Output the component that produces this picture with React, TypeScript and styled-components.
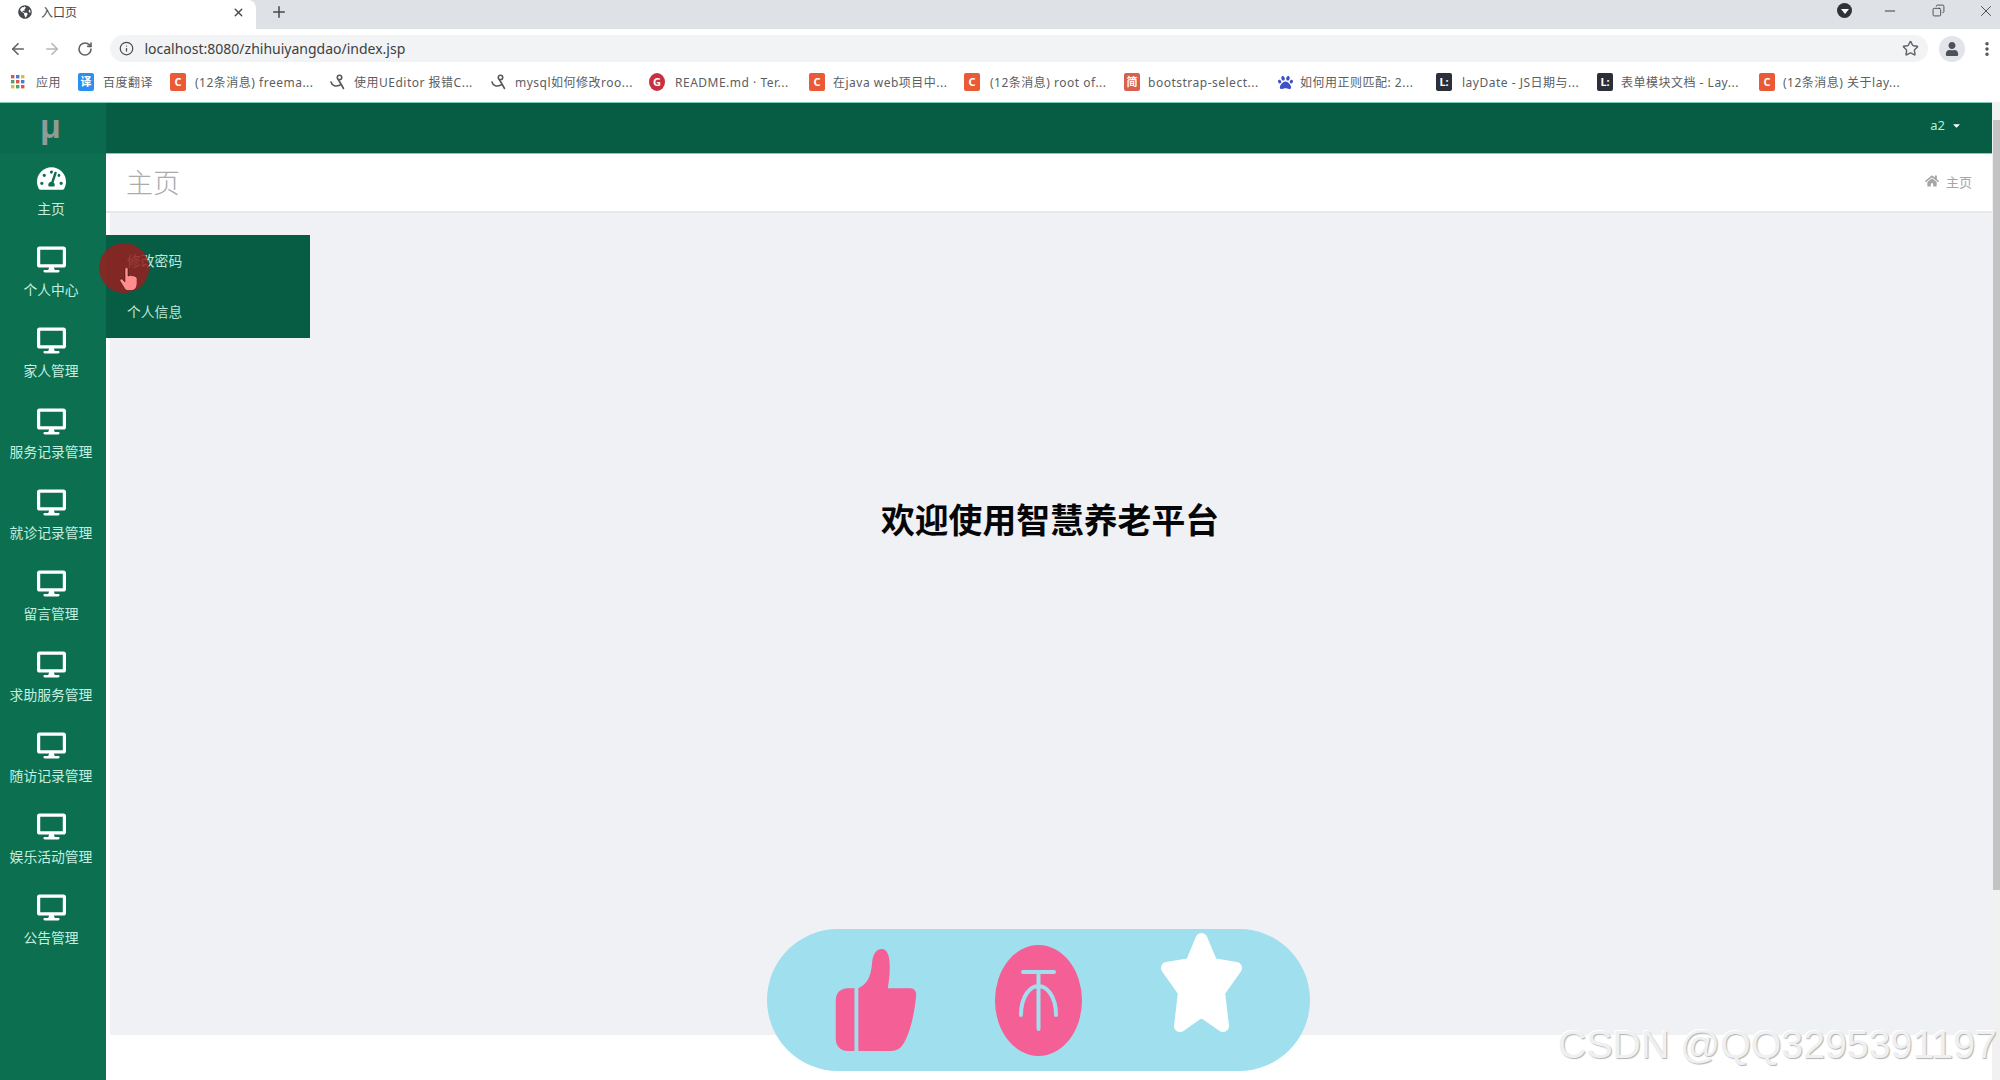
import React from "react";
import styled, { createGlobalStyle } from "styled-components";
import { ArrowLeft, ArrowRight, RotateCw, Info, Star, EllipsisVertical, Minus, X, Plus, Copy } from "lucide-react";
import { FaDesktop, FaTachometerAlt, FaHome, FaGlobeAmericas, FaUser, FaPaw, FaCaretDown } from "react-icons/fa";

const CJK = `"Noto Sans", "Noto Sans CJK SC", sans-serif`;

const Global = createGlobalStyle`
  html, body { margin: 0; padding: 0; width: 2000px; height: 1080px; overflow: hidden; background: #fff; }
  * { box-sizing: border-box; }
  body { font-family: ${CJK}; }
`;

const Screen = styled.div`
  position: relative;
  width: 2000px;
  height: 1080px;
  display: flex;
  flex-direction: column;
  overflow: hidden;
`;

/* ---------- browser chrome ---------- */
const TabStrip = styled.div`
  height: 29px;
  flex: none;
  background: #dee1e6;
  display: flex;
  align-items: stretch;
  color: #3c4043;
`;
const Tab = styled.div`
  width: 256px;
  background: #fff;
  border-top-right-radius: 8px;
  display: flex;
  align-items: center;
  padding: 0 11px 5px 18px;
  gap: 9px;
  font-size: 12px;
  color: #45484c;
`;
const TabTitle = styled.span`
  flex: 1;
`;
const NewTab = styled.div`
  width: 46px;
  display: flex;
  align-items: center;
  justify-content: center;
  color: #45484c;
  padding-bottom: 5px;
`;
const WindowControls = styled.div`
  margin-left: auto;
  margin-right: -10px;
  display: flex;
  align-items: center;
  padding-bottom: 8px;
  color: #3c4043;
`;
const ProfileDot = styled.div`
  width: 15px;
  height: 15px;
  border-radius: 50%;
  background: #303336;
  margin-right: 14px;
  display: flex;
  align-items: center;
  justify-content: center;
  &::after {
    content: "";
    border-left: 4px solid transparent;
    border-right: 4px solid transparent;
    border-top: 5px solid #fff;
    margin-top: 1px;
  }
`;
const WinButton = styled.div`
  width: 48px;
  height: 20px;
  display: flex;
  align-items: center;
  justify-content: center;
`;
const Toolbar = styled.div`
  height: 33px;
  flex: none;
  background: #fff;
  display: flex;
  align-items: center;
  padding: 6px 4px 0 1px;
  color: #5f6368;
`;
const NavButton = styled.div<{ $dim?: boolean }>`
  width: 33px;
  margin-left: 1px;
  display: flex;
  align-items: center;
  justify-content: center;
  color: ${(p) => (p.$dim ? "#b4b7bb" : "#5f6368")};
`;
const Omnibox = styled.div`
  flex: none;
  width: 1818px;
  height: 27px;
  margin-left: 9px;
  border-radius: 14px;
  background: #f1f3f4;
  display: flex;
  align-items: center;
  padding: 0 9px 0 9px;
  gap: 10px;
`;
const Url = styled.span`
  flex: 1;
  font-size: 14px;
  color: #3d4043;
`;
const Avatar = styled.div`
  width: 26px;
  height: 26px;
  margin-left: 11px;
  border-radius: 50%;
  background: #e3e4ea;
  color: #4c5058;
  display: flex;
  align-items: center;
  justify-content: center;
`;
const MenuDots = styled.div`
  margin-left: 13px;
  color: #4c5058;
  display: flex;
`;
const Bookmarks = styled.div`
  height: 40px;
  flex: none;
  background: #fff;
  display: flex;
  align-items: center;
  padding-left: 11px;
`;
const Bookmark = styled.div<{ $w: number; $gap: number }>`
  width: ${(p) => p.$w}px;
  flex: none;
  display: flex;
  align-items: center;
  gap: ${(p) => p.$gap}px;
  font-size: 12px;
  letter-spacing: 0.5px;
  color: #5b5e62;
  white-space: nowrap;
`;
const Favicon = styled.span<{ $bg: string; $round?: boolean }>`
  width: 16px;
  height: 18px;
  flex: none;
  background: ${(p) => p.$bg};
  border-radius: ${(p) => (p.$round ? "50%" : "2px")};
  color: #fff;
  font-size: 11px;
  line-height: 18px;
  font-weight: 700;
  letter-spacing: 0;
  text-align: center;
`;
const PlainIcon = styled.span`
  width: 16px;
  height: 16px;
  flex: none;
  display: flex;
  align-items: center;
  justify-content: center;
`;

/* ---------- application ---------- */
const Frame = styled.div`
  flex: 1;
  min-height: 0;
  display: flex;
`;
const Page = styled.div`
  flex: 1;
  min-width: 0;
  display: flex;
  flex-direction: column;
`;
const TopRow = styled.header`
  height: 52px;
  flex: none;
  display: flex;
  background: #075d44;
  border-top: 1px solid #7fcfb8;
`;
const Logo = styled.div`
  width: 106px;
  flex: none;
  background: #0a6a4d;
  color: #8f9b97;
  font-family: "Liberation Sans", sans-serif;
  font-weight: 700;
  font-size: 34px;
  line-height: 46px;
  text-align: center;
  padding-right: 5px;
`;
const TopBar = styled.div`
  flex: 1;
  display: flex;
  justify-content: flex-end;
  border-bottom: 1px solid #7fcfb8;
`;
const UserMenu = styled.div`
  margin-right: 30px;
  display: flex;
  align-items: center;
  gap: 6px;
  padding-bottom: 6px;
  color: #b9ecd9;
  font-size: 13px;
`;
const Body = styled.div`
  flex: 1;
  min-height: 0;
  display: flex;
`;
const Sidebar = styled.nav`
  width: 106px;
  flex: none;
  background: #0c7050;
  display: flex;
  flex-direction: column;
`;
const NavItem = styled.div`
  height: 81px;
  flex: none;
  padding: 10px 4px 0 0;
  display: flex;
  flex-direction: column;
  align-items: center;
  color: #fff;
`;
const NavIcon = styled.div`
  height: 28px;
  display: flex;
  align-items: center;
  justify-content: center;
`;
const NavLabel = styled.div`
  margin-top: 7px;
  font-size: 13.8px;
  line-height: 20px;
  color: #c4efe0;
  white-space: nowrap;
`;
const Main = styled.main`
  position: relative;
  flex: 1;
  min-width: 0;
  display: flex;
  flex-direction: column;
  background: #fff;
`;
const PageHeader = styled.div`
  height: 59px;
  flex: none;
  background: #fff;
  border-bottom: 2px solid #e6e8eb;
  display: flex;
  align-items: center;
  justify-content: space-between;
  padding: 0 20px 3px 20px;
`;
const PageTitle = styled.h2`
  margin: 0;
  font-size: 27px;
  font-weight: 300;
  color: #a9abad;
`;
const Crumb = styled.div`
  display: flex;
  align-items: center;
  gap: 7px;
  font-size: 13px;
  color: #a3a5a7;
`;
const Content = styled.section`
  flex: 1;
  margin-left: 4px;
  background: #f0f1f4;
  padding: 282px 2px 0 0;
  text-align: center;
`;
const Welcome = styled.h1`
  margin: 0;
  font-size: 33.8px;
  line-height: 50px;
  font-weight: 700;
  color: #060608;
`;
const Foot = styled.div`
  height: 45px;
  flex: none;
  background: #fff;
`;
const DropMenu = styled.div`
  position: absolute;
  left: 0;
  top: 81px;
  width: 204px;
  height: 103px;
  background: #075d44;
  padding: 0 0 2px 21px;
  display: flex;
  flex-direction: column;
  color: #bfe6d8;
  font-size: 13.8px;
`;
const DropItem = styled.div`
  height: 51px;
  display: flex;
  align-items: center;
`;
const ClickMark = styled.div`
  position: absolute;
  left: -7px;
  top: 89px;
  width: 50px;
  height: 50px;
  border-radius: 50%;
  background: rgba(150, 30, 30, 0.85);
`;
const HandIcon = styled.svg`
  position: absolute;
  left: 14px;
  top: 113px;
`;
const ScrollTrack = styled.div`
  width: 8px;
  flex: none;
  background: #f1f1f2;
  padding-top: 18px;
`;
const ScrollThumb = styled.div`
  height: 770px;
  background: #c3c3c5;
  margin-left: 1px;
`;

/* ---------- floating overlays ---------- */
const ActionPill = styled.div`
  position: absolute;
  left: 767px;
  top: 929px;
  width: 543px;
  height: 142px;
  border-radius: 71px;
  background: #9fdfee;
  display: grid;
  grid-template-columns: 163px 163px 163px;
  justify-content: center;
  align-items: center;
  justify-items: center;
`;
const Raised = styled.div`
  display: flex;
  margin-bottom: 35px;
`;
const Watermark = styled.div`
  position: absolute;
  left: 1558px;
  top: 1020px;
  font-family: "Liberation Sans", sans-serif;
  font-size: 39.3px;
  line-height: 48px;
  white-space: nowrap;
  color: #eef0f2;
  text-shadow: 1px 1px 1px #b0b2b4, -1px -1px 0 #fff;
`;

const navItems = ["个人中心", "家人管理", "服务记录管理", "就诊记录管理", "留言管理", "求助服务管理", "随访记录管理", "娱乐活动管理", "公告管理"];

const Apps = () => (
  <svg width="14" height="14" viewBox="0 0 14 14">
    {[0, 5, 10].flatMap((y, r) =>
      [0, 5, 10].map((x, c) => (
        <rect key={`${r}${c}`} x={x} y={y} width="3.4" height="3.4" fill={["#d9534f", "#3d7fd9", "#e2b93b", "#4aa564", "#d9534f", "#3d7fd9", "#e2b93b", "#4aa564", "#d9534f"][r * 3 + c]} />
      ))
    )}
  </svg>
);
const Swirl = () => (
  <svg width="16" height="16" viewBox="0 0 16 16" fill="none" stroke="#55585c" strokeWidth="1.6" strokeLinecap="round">
    <circle cx="9.5" cy="3.5" r="2.2" />
    <path d="M8.5 6 11 10l2.5 4.5M1 8c1 4 5 5 9 3" />
  </svg>
);

const bookmarks: { w: number; gap: number; text: string; icon: React.ReactNode }[] = [
  { w: 67, gap: 11, text: "应用", icon: <Apps /> },
  { w: 92, gap: 9, text: "百度翻译", icon: <Favicon $bg="#2b8ff0">译</Favicon> },
  { w: 160, gap: 9, text: "(12条消息) freema...", icon: <Favicon $bg="#ea5a36">C</Favicon> },
  { w: 161, gap: 8, text: "使用UEditor 报错C...", icon: <PlainIcon><Swirl /></PlainIcon> },
  { w: 158, gap: 8, text: "mysql如何修改roo...", icon: <PlainIcon><Swirl /></PlainIcon> },
  { w: 160, gap: 10, text: "README.md · Ter...", icon: <Favicon $bg="#c8303f" $round>G</Favicon> },
  { w: 155, gap: 8, text: "在java web项目中...", icon: <Favicon $bg="#ea5a36">C</Favicon> },
  { w: 160, gap: 10, text: "(12条消息) root of...", icon: <Favicon $bg="#ea5a36">C</Favicon> },
  { w: 153, gap: 8, text: "bootstrap-select...", icon: <Favicon $bg="#d9604f">简</Favicon> },
  { w: 159, gap: 7, text: "如何用正则匹配: 2...", icon: <PlainIcon><FaPaw size={15} color="#3f51c4" /></PlainIcon> },
  { w: 161, gap: 10, text: "layDate - JS日期与...", icon: <Favicon $bg="#2b2f3a">L:</Favicon> },
  { w: 162, gap: 8, text: "表单模块文档 - Lay...", icon: <Favicon $bg="#2b2f3a">L:</Favicon> },
  { w: 160, gap: 8, text: "(12条消息) 关于lay...", icon: <Favicon $bg="#ea5a36">C</Favicon> },
];

export default function App() {
  return (
    <Screen>
      <Global />
      <TabStrip>
        <Tab>
          <FaGlobeAmericas size={14} color="#45484c" />
          <TabTitle>入口页</TabTitle>
          <X size={13} strokeWidth={2.5} />
        </Tab>
        <NewTab>
          <Plus size={18} strokeWidth={2} />
        </NewTab>
        <WindowControls>
          <ProfileDot />
          <WinButton><Minus size={16} strokeWidth={1.5} /></WinButton>
          <WinButton><Copy size={13} strokeWidth={1.6} style={{ transform: "scaleX(-1)" }} /></WinButton>
          <WinButton><X size={18} strokeWidth={1.2} /></WinButton>
        </WindowControls>
      </TabStrip>
      <Toolbar>
        <NavButton><ArrowLeft size={18} strokeWidth={2.2} /></NavButton>
        <NavButton $dim><ArrowRight size={18} strokeWidth={2.2} /></NavButton>
        <NavButton><RotateCw size={16} strokeWidth={2.4} /></NavButton>
        <Omnibox>
          <Info size={15} strokeWidth={2} color="#4c5054" />
          <Url>localhost:8080/zhihuiyangdao/index.jsp</Url>
          <Star size={17} strokeWidth={2} color="#5f6368" />
        </Omnibox>
        <Avatar><FaUser size={14} /></Avatar>
        <MenuDots><EllipsisVertical size={18} strokeWidth={2.6} /></MenuDots>
      </Toolbar>
      <Bookmarks>
        {bookmarks.map((b) => (
          <Bookmark key={b.text} $w={b.w} $gap={b.gap}>
            {b.icon}
            <span>{b.text}</span>
          </Bookmark>
        ))}
      </Bookmarks>
      <Frame>
        <Page>
          <TopRow>
            <Logo>μ</Logo>
            <TopBar>
              <UserMenu>
                a2 <FaCaretDown size={11} color="#fff" />
              </UserMenu>
            </TopBar>
          </TopRow>
          <Body>
            <Sidebar>
              <NavItem>
                <NavIcon><FaTachometerAlt size={29} /></NavIcon>
                <NavLabel>主页</NavLabel>
              </NavItem>
              {navItems.map((n) => (
                <NavItem key={n}>
                  <NavIcon><FaDesktop size={29} /></NavIcon>
                  <NavLabel>{n}</NavLabel>
                </NavItem>
              ))}
            </Sidebar>
            <Main>
              <PageHeader>
                <PageTitle>主页</PageTitle>
                <Crumb><FaHome size={14} />主页</Crumb>
              </PageHeader>
              <Content>
                <Welcome>欢迎使用智慧养老平台</Welcome>
              </Content>
              <Foot />
              <DropMenu>
                <DropItem>修改密码</DropItem>
                <DropItem>个人信息</DropItem>
              </DropMenu>
              <ClickMark />
              <HandIcon width="17" height="24" viewBox="0 0 17 24">
                <path d="M5 2c0-2 3-2 3 0v7l1 0c1-1 2-1 3 0 1-.5 2-.5 3 .5 1 0 2 1 2 2v5c0 4-2 7-6 7H8c-2 0-3-1-4-3L0 14c-.5-2 2-3 3-1l2 2z" fill="#ff8d8d" stroke="#20100f" strokeWidth="0.5" />
              </HandIcon>
            </Main>
          </Body>
        </Page>
        <ScrollTrack><ScrollThumb /></ScrollTrack>
      </Frame>
      <ActionPill>
        <svg width="82" height="102" viewBox="0 0 82 104" fill="#f45f96">
          <path d="M19 40V104H12C4 104 0 98 0 92V52C0 44 6 40 12 40Z" />
          <path d="M23 104V40C32 36 36 28 37 14C38 4 42 0 47 0C53 0 55 8 55 18C55 28 54 34 53 40H76C80 40 82 43 82 47C80 70 74 90 68 98C65 103 60 104 56 104Z" />
        </svg>
        <svg width="87" height="111" viewBox="0 0 87 111" fill="none">
          <ellipse cx="43.5" cy="55.5" rx="43.5" ry="55.5" fill="#f45f96" />
          <path d="M28 27H59M43.5 27V84M26 70C26 50 36 41 43.5 41C51 41 61 50 61 70" stroke="#9fdfee" strokeWidth="4" strokeLinecap="round" />
        </svg>
        <Raised>
          <svg width="81" height="101" viewBox="0 0 81 101" fill="#fff" stroke="#fff" strokeWidth="12" strokeLinejoin="round">
            <path d="M40.5 7L51 32L75 36L58 60L62 94L40.5 79L19 94L23 60L6 36L30 32Z" />
          </svg>
        </Raised>
      </ActionPill>
      <Watermark>CSDN @QQ3295391197</Watermark>
    </Screen>
  );
}
